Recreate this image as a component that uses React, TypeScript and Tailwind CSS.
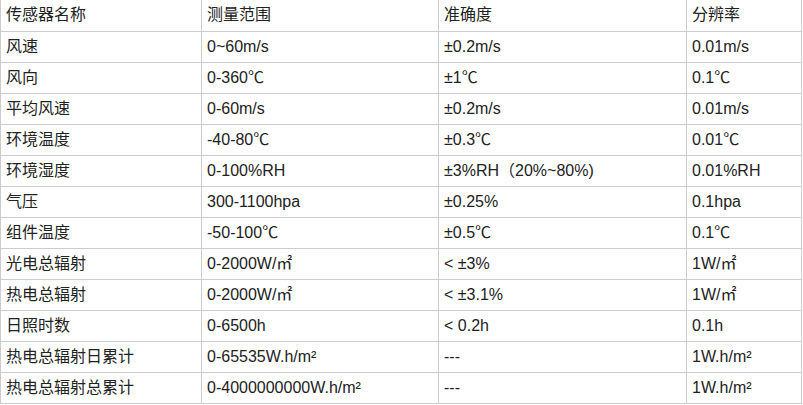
import * as React from "react";

const rows: string[][] = [
  ["风速", "0~60m/s", "±0.2m/s", "0.01m/s"],
  ["风向", "0-360℃", "±1℃", "0.1℃"],
  ["平均风速", "0-60m/s", "±0.2m/s", "0.01m/s"],
  ["环境温度", "-40-80℃", "±0.3℃", "0.01℃"],
  ["环境湿度", "0-100%RH", "±3%RH（20%~80%)", "0.01%RH"],
  ["气压", "300-1100hpa", "±0.25%", "0.1hpa"],
  ["组件温度", "-50-100℃", "±0.5℃", "0.1℃"],
  ["光电总辐射", "0-2000W/㎡", "< ±3%", "1W/㎡"],
  ["热电总辐射", "0-2000W/㎡", "< ±3.1%", "1W/㎡"],
  ["日照时数", "0-6500h", "< 0.2h", "0.1h"],
  ["热电总辐射日累计", "0-65535W.h/m²", "---", "1W.h/m²"],
  ["热电总辐射总累计", "0-4000000000W.h/m²", "---", "1W.h/m²"],
];

const cell = "border border-[#cccccc] h-[31px] px-[5px] align-middle whitespace-nowrap";

export default function App() {
  return (
    <div className="w-[803px] h-[405px] bg-white text-[#222222] text-[16px] leading-5 font-['Liberation_Sans','Noto_Sans_CJK_SC',sans-serif]">
      <table className="table-fixed border-collapse w-[801px]">
        <colgroup>
          <col className="w-[201px]" />
          <col className="w-[237px]" />
          <col className="w-[248px]" />
          <col className="w-[115px]" />
        </colgroup>
        <thead>
          <tr>
            {["传感器名称", "测量范围", "准确度", "分辨率"].map((h) => (
              <th key={h} className={`${cell} text-left font-normal border-t-0`}>
                {h}
              </th>
            ))}
          </tr>
        </thead>
        <tbody>
          {rows.map((r, i) => (
            <tr key={i}>
              {r.map((c, j) => (
                <td key={j} className={cell}>
                  {c}
                </td>
              ))}
            </tr>
          ))}
        </tbody>
      </table>
    </div>
  );
}
